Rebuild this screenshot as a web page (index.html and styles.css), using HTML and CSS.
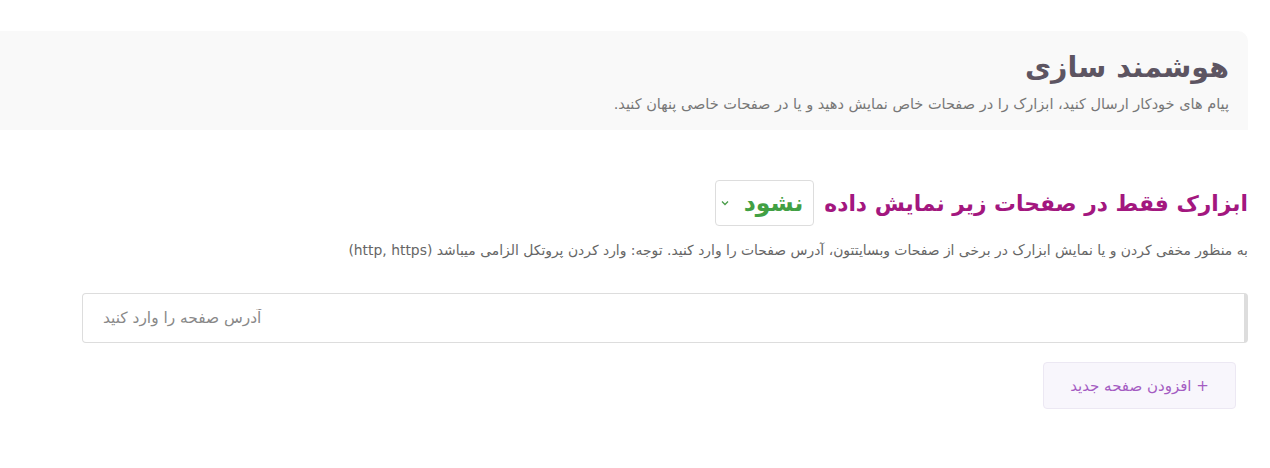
FILE: index.html
```html
<!DOCTYPE html>
<html lang="fa" dir="rtl">
<head>
    <meta charset="UTF-8">
    <meta name="viewport" content="width=device-width, initial-scale=1.0">
    <title>هوشمند سازی</title>
    <link rel="stylesheet" href="styles.css">
</head>
<body>
    <div class="page">
        <div class="page-header">
            <h1>هوشمند سازی</h1>
            <p>پیام های خودکار ارسال کنید، ابزارک را در صفحات خاص نمایش دهید و یا در صفحات خاصی پنهان کنید.</p>
        </div>

        <div class="section">
            <div class="section-title">
                <h2>ابزارک فقط در صفحات زیر نمایش داده</h2>
                <div class="mode-select">
                    <span>نشود</span>
                    <svg width="8" height="6" viewBox="0 0 8 6"><path d="M1 1.5 L4 4.5 L7 1.5" fill="none" stroke="#4a9d4a" stroke-width="1.3"/></svg>
                </div>
            </div>
            <p class="hint">به منظور مخفی کردن و یا نمایش ابزارک در برخی از صفحات وبسایتتون، آدرس صفحات را وارد کنید. توجه: وارد کردن پروتکل الزامی میباشد (http, https)</p>

            <input type="text" class="url-input" dir="ltr" placeholder="آدرس صفحه را وارد کنید">

            <button type="button" class="add-btn">+ افزودن صفحه جدید</button>
        </div>
    </div>
</body>
</html>
```

FILE: styles.css
```css
body {
    margin: 0;
    padding: 0 22px 0 0;
    background-color: #fff;
    font-family: 'DejaVu Sans', 'Noto Sans', sans-serif;
    color: #555;
}

.page {
    padding-top: 31px;
}

.page-header {
    background-color: #f9f9f9;
    border-top-right-radius: 10px;
    height: 99px;
    box-sizing: border-box;
    padding: 15px 19px 0 0;
}

.page-header h1 {
    margin: 0;
    font-size: 28.5px;
    font-weight: bold;
    color: #5d5562;
    line-height: 44px;
}

.page-header p {
    margin: 6px 0 0;
    font-size: 14.5px;
    color: #777;
}

.section {
    padding-top: 50px;
}

.section-title {
    display: flex;
    align-items: center;
    gap: 10px;
}

.section-title h2 {
    margin: 0;
    font-size: 21.8px;
    font-weight: bold;
    color: #a3177f;
}

.mode-select {
    display: flex;
    align-items: center;
    gap: 15px;
    height: 46px;
    box-sizing: border-box;
    padding: 0 10px 0 5px;
    border: 1px solid #ddd;
    border-radius: 4px;
    color: #42a044;
    font-size: 23.5px;
    font-weight: bold;
}

.hint {
    margin: 16px 0 0;
    font-size: 13.9px;
    color: #666;
}

.url-input {
    display: block;
    margin: 35px 0 0 0;
    width: 1166px;
    height: 50px;
    box-sizing: border-box;
    padding: 0 20px;
    border: 1px solid #ddd;
    border-right: 4px solid #ddd;
    border-radius: 4px;
    font-family: inherit;
    font-size: 15.4px;
    color: #555;
    outline: none;
}

.url-input::placeholder {
    color: #888;
}

.add-btn {
    display: block;
    margin: 19px 12px 0 0;
    width: 193px;
    height: 47px;
    background-color: #f8f6fc;
    border: 1px solid #ece8f3;
    border-radius: 4px;
    color: #a45cc2;
    font-family: inherit;
    font-size: 15px;
    cursor: pointer;
}
```
